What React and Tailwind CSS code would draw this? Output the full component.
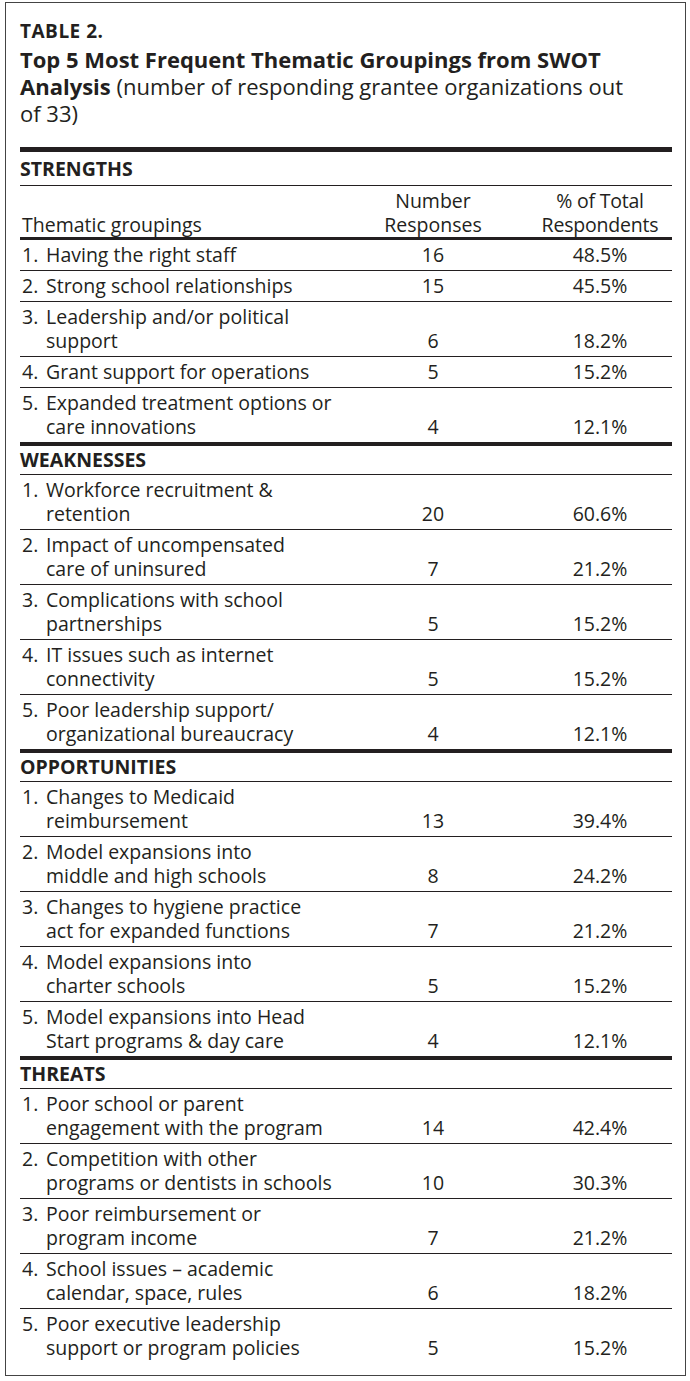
import React from 'react';

const sections = [
  {
    title: 'STRENGTHS',
    header: true,
    rows: [
      { lines: ['Having the right staff'], n: '16', pct: '48.5%' },
      { lines: ['Strong school relationships'], n: '15', pct: '45.5%' },
      { lines: ['Leadership and/or political', 'support'], n: '6', pct: '18.2%' },
      { lines: ['Grant support for operations'], n: '5', pct: '15.2%' },
      { lines: ['Expanded treatment options or', 'care innovations'], n: '4', pct: '12.1%' },
    ],
  },
  {
    title: 'WEAKNESSES',
    rows: [
      { lines: ['Workforce recruitment &', 'retention'], n: '20', pct: '60.6%' },
      { lines: ['Impact of uncompensated', 'care of uninsured'], n: '7', pct: '21.2%' },
      { lines: ['Complications with school', 'partnerships'], n: '5', pct: '15.2%' },
      { lines: ['IT issues such as internet', 'connectivity'], n: '5', pct: '15.2%' },
      { lines: ['Poor leadership support/', 'organizational bureaucracy'], n: '4', pct: '12.1%' },
    ],
  },
  {
    title: 'OPPORTUNITIES',
    rows: [
      { lines: ['Changes to Medicaid', 'reimbursement'], n: '13', pct: '39.4%' },
      { lines: ['Model expansions into', 'middle and high schools'], n: '8', pct: '24.2%' },
      { lines: ['Changes to hygiene practice', 'act for expanded functions'], n: '7', pct: '21.2%' },
      { lines: ['Model expansions into', 'charter schools'], n: '5', pct: '15.2%' },
      { lines: ['Model expansions into Head', 'Start programs & day care'], n: '4', pct: '12.1%' },
    ],
  },
  {
    title: 'THREATS',
    rows: [
      { lines: ['Poor school or parent', 'engagement with the program'], n: '14', pct: '42.4%' },
      { lines: ['Competition with other', 'programs or dentists in schools'], n: '10', pct: '30.3%' },
      { lines: ['Poor reimbursement or', 'program income'], n: '7', pct: '21.2%' },
      { lines: ['School issues – academic', 'calendar, space, rules'], n: '6', pct: '18.2%' },
      { lines: ['Poor executive leadership', 'support or program policies'], n: '5', pct: '15.2%' },
    ],
  },
];

const Row = ({ idx, row, last }) => (
  <div className={`flex items-end py-[3px] ${last ? '' : 'border-b border-[#231f20]'}`}>
    <div className="flex-1 flex">
      <span className="w-[26px] pl-[2px]">{idx}.</span>
      <div className="flex flex-col whitespace-nowrap">
        {row.lines.map((l) => (
          <span key={l}>{l}</span>
        ))}
      </div>
    </div>
    <div className="w-[146px] mr-[22px] text-center">{row.n}</div>
    <div className="w-[144px] text-center">{row.pct}</div>
  </div>
);

const Section = ({ section, first }) => (
  <div className={first ? 'border-t-[5px] border-[#231f20]' : 'border-t-[4px] border-[#231f20]'}>
    <div
      className={`font-bold text-[19.5px] leading-[24px] border-b border-[#231f20] ${
        first ? 'pt-[5px] pb-[4px]' : 'pt-[2px] pb-[2px]'
      }`}
    >
      {section.title}
    </div>
    {section.header && (
      <div className="flex items-end pt-[3px] border-b-[3px] border-[#231f20]">
        <div className="flex-1 pl-[2px]">Thematic groupings</div>
        <div className="w-[146px] mr-[22px] text-center flex flex-col">
          <span>Number</span>
          <span>Responses</span>
        </div>
        <div className="w-[144px] text-center flex flex-col tracking-[-0.2px]">
          <span>% of Total</span>
          <span>Respondents</span>
        </div>
      </div>
    )}
    {section.rows.map((row, i) => (
      <Row key={i} idx={i + 1} row={row} last={i === section.rows.length - 1} />
    ))}
  </div>
);

export default function App() {
  return (
    <div className="bg-white w-[690px] h-[1381px] pt-[2px] pl-[5px] font-['Open_Sans',sans-serif] text-[#231f20]">
      <div className="w-[681px] h-[1374px] border border-[#444] pl-[14px] pr-[13px] pt-[16px]">
        <div className="font-bold text-[19px] leading-[24px] tracking-[0.5px]">TABLE 2.</div>
        <div className="text-[22px] leading-[27px] mt-[3px] whitespace-nowrap">
          <div className="font-bold">Top 5 Most Frequent Thematic Groupings from SWOT</div>
          <div>
            <span className="font-bold">Analysis</span> (number of responding grantee organizations out
          </div>
          <div>of 33)</div>
        </div>
        <div className="mt-[20px] text-[19.5px] leading-[24px]">
          {sections.map((s, i) => (
            <Section key={s.title} section={s} first={i === 0} />
          ))}
        </div>
      </div>
    </div>
  );
}
